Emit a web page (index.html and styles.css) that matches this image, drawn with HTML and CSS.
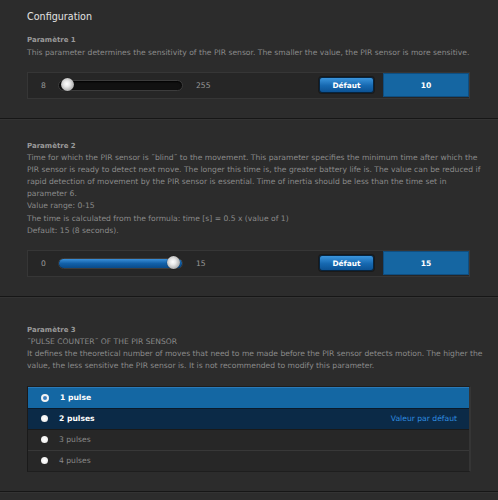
FILE: index.html
```html
<!DOCTYPE html>
<html>
<head>
<meta charset="utf-8">
<link rel="stylesheet" href="styles.css">
</head>
<body>
<div class="section s1">
  <h1 class="title">Configuration</h1>
  <h2 class="ptitle">Paramètre 1</h2>
  <p class="desc">This parameter determines the sensitivity of the PIR sensor. The smaller the value, the PIR sensor is more sensitive.</p>
  <div class="ctrl">
    <span class="min">8</span>
    <div class="track"><div class="fill" style="width:0%"></div><div class="knob" style="left:2px"></div></div>
    <span class="max">255</span>
    <span class="spacer"></span>
    <button class="btn">Défaut</button>
    <div class="value">10</div>
  </div>
</div>
<div class="section s2">
  <h2 class="ptitle">Paramètre 2</h2>
  <p class="desc">Time for which the PIR sensor is ˝blind˝ to the movement. This parameter specifies the minimum time after which the PIR sensor is ready to detect next move. The longer this time is, the greater battery life is. The value can be reduced if rapid detection of movement by the PIR sensor is essential. Time of inertia should be less than the time set in parameter 6.<br>Value range: 0-15<br>The time is calculated from the formula: time [s] = 0.5 x (value of 1)<br>Default: 15 (8 seconds).</p>
  <div class="ctrl">
    <span class="min">0</span>
    <div class="track"><div class="fill" style="width:100%"></div><div class="knob" style="left:108px"></div></div>
    <span class="max">15</span>
    <span class="spacer"></span>
    <button class="btn">Défaut</button>
    <div class="value">15</div>
  </div>
</div>
<div class="section s3">
  <h2 class="ptitle">Paramètre 3</h2>
  <p class="desc">˝PULSE COUNTER˝ OF THE PIR SENSOR<br>It defines the theoretical number of moves that need to me made before the PIR sensor detects motion. The higher the value, the less sensitive the PIR sensor is. It is not recommended to modify this parameter.</p>
  <div class="list">
    <div class="opt sel"><span class="radio on"></span><span class="lbl">1 pulse</span></div>
    <div class="opt def"><span class="radio"></span><span class="lbl">2 pulses</span><span class="deflbl">Valeur par défaut</span></div>
    <div class="opt"><span class="radio"></span><span class="lbl">3 pulses</span></div>
    <div class="opt"><span class="radio"></span><span class="lbl">4 pulses</span></div>
  </div>
</div>
</body>
</html>
```
FILE: styles.css
```css
html, body { margin: 0; padding: 0; }
body {
  background: #2c2c2c;
  font-family: "DejaVu Sans", Verdana, sans-serif;
  color: #8c8c8c;
  font-size: 7.62px;
  width: 498px;
  height: 500px;
  overflow: hidden;
}
.section {
  padding: 0 28px 19px 27px;
  border-bottom: 1px solid #161616;
  box-shadow: 0 1px 0 #333;
}
.s1 { padding-top: 9px; }
.s2 { padding-top: 21px; }
.s3 { padding-top: 27px; }
.title {
  margin: 0 0 9px 0;
  font-size: 9.6px;
  font-weight: normal;
  color: #e2e2e2;
  line-height: 16px;
}
.ptitle {
  margin: 0;
  font-size: 7px;
  font-weight: bold;
  color: #9a9a9a;
  line-height: 12.5px;
}
.desc {
  margin: 0 -14px 13px 0;
  line-height: 12.1px;
  color: #8a8a8a;
}
.ctrl {
  display: flex;
  align-items: center;
  height: 25px;
  padding: 0 0 0 13px;
  background: #262626;
  border: 1px solid #363636;
  border-right-color: #3a3a3a;
}
.min { width: 17px; color: #999; }
.track {
  position: relative;
  width: 123px;
  height: 9px;
  border: 1px solid #3c3c3c;
  border-radius: 6px;
  background: #111;
  box-shadow: inset 0 1px 2px #000;
}
.fill {
  height: 100%;
  border-radius: 5px;
  background: linear-gradient(#3a8fd8, #1260a8 50%, #0a4a88);
}
.knob {
  position: absolute;
  top: -3px;
  width: 13px;
  height: 13px;
  border-radius: 50%;
  background: radial-gradient(circle at 45% 45%, #fff 0, #e8e8e8 30%, #a8a8a8 75%, #777 100%);
  box-shadow: 0 0 1px #000;
}
.max { margin-left: 13px; color: #999; }
.spacer { flex: 1; }
.btn {
  width: 55px;
  height: 16px;
  padding: 0;
  border: 1px solid #06243f;
  border-radius: 3px;
  background: linear-gradient(#3b95dc, #1668b0 55%, #0c5294);
  color: #fff;
  font-family: "DejaVu Sans", Verdana, sans-serif;
  font-size: 7.4px;
  font-weight: bold;
  box-shadow: 0 0 0 1px #1a1a1a;
}
.value {
  width: 84px;
  height: 22px;
  margin-left: 9px;
  background: #1566a2;
  border: 1px solid #0f4e80;
  color: #fff;
  font-weight: bold;
  font-size: 7.6px;
  display: flex;
  align-items: center;
  justify-content: center;
}
.list {
  border: 1px solid #1e1e1e;
  border-left-color: #1a1a1a;
  border-right: 2px solid #353535;
  margin-right: -1px;
}
.opt {
  display: flex;
  align-items: center;
  height: 20px;
  border-top: 1px solid #1a1a1a;
  background: #272727;
  color: #8a8a8a;
  padding-left: 13px;
}
.opt:first-child { border-top: none; }
.opt + .opt:nth-child(4) { border-top: 1px solid #383838; }
.opt.sel {
  background: #1467a3;
  color: #fff;
  font-weight: bold;
  border-top: 1px solid #2a7ab8;
}
.opt.def {
  background: #0b2a47;
  color: #fff;
  font-weight: bold;
  border-top: 1px solid #0a1a2a;
}
.radio {
  width: 7px;
  height: 7px;
  border-radius: 50%;
  background: radial-gradient(circle, #fff 0, #f2f2f2 60%, #bbb 100%);
  box-sizing: border-box;
}
.radio.on {
  border: 2px solid #f2f2f2;
  background: #3a7fc0;
  width: 8px;
  height: 8px;
}
.lbl { margin-left: 11px; }
.deflbl {
  margin-left: auto;
  margin-right: 12px;
  color: #2f8de0;
  font-weight: normal;
}
```
